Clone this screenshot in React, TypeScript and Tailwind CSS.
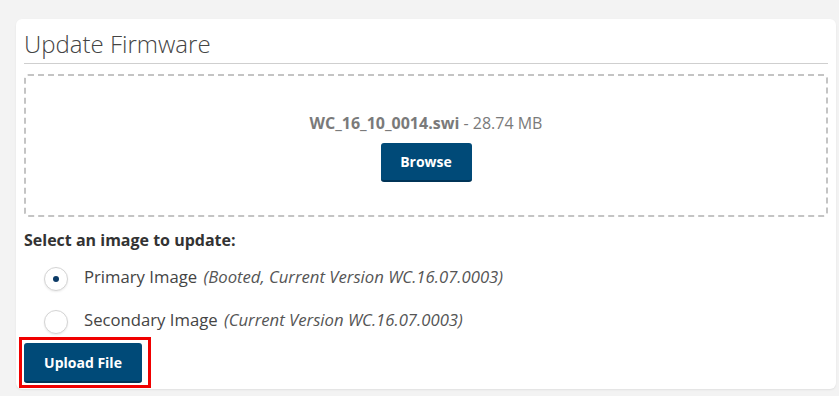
import React from "react";

const font = { fontFamily: '"Open Sans", "Liberation Sans", sans-serif' };

function Radio({ checked }: { checked?: boolean }) {
    return (
        <span className="mt-[6px] flex h-[24px] w-[24px] shrink-0 items-center justify-center rounded-full border border-[#d4d4d4] bg-white shadow-[0_1px_2px_rgba(0,0,0,0.08)]">
            {checked && <span className="h-[6px] w-[6px] rounded-full bg-[#0b3a66]"></span>}
        </span>
    );
}

export default function App() {
    return (
        <div className="min-h-[396px] bg-[#f3f3f3] pl-[16px] pr-[3px] pt-[19px] [font-family:'Open_Sans','Liberation_Sans',sans-serif]">
            <div className="h-[370px] rounded-[6px] bg-white px-[8px] shadow-[0_1px_2px_rgba(0,0,0,0.08)]">
                {/* Title */}
                <h1 className="border-b border-[#cfcfcf] pb-[3px] pt-[9px] text-[24px] font-light leading-[32px] text-[#444]">
                    Update Firmware
                </h1>

                {/* Drop zone */}
                <div className="mt-[10px] flex h-[143px] flex-col items-center justify-center gap-[9px] rounded-[4px] border-2 border-dashed border-[#c4c4c4] pt-[3px]">
                    <p className="text-[16px] leading-[22px] text-[#7a7a7a]">
                        <span className="font-bold">WC_16_10_0014.swi</span> - 28.74 MB
                    </p>
                    <button className="h-[39px] w-[91px] rounded-[3px] border-b-2 border-[#003457] bg-[#004a78] text-[14px] font-bold text-white">
                        Browse
                    </button>
                </div>

                <p className="mt-[12px] text-[16px] font-bold leading-[22px] text-[#333]">Select an image to update:</p>

                <div className="mt-[10px] flex flex-col gap-[12px] pl-[20px] text-[16.7px] leading-[31px] text-[#444]">
                    <label className="flex items-start gap-[16px]">
                        <Radio checked />
                        <span>
                            Primary Image <i className="pl-[2px] text-[#555]">(Booted, Current Version WC.16.07.0003)</i>
                        </span>
                    </label>
                    <label className="flex items-start gap-[16px]">
                        <Radio />
                        <span>
                            Secondary Image <i className="pl-[2px] text-[#555]">(Current Version WC.16.07.0003)</i>
                        </span>
                    </label>
                </div>

                <div className="relative mt-[8px] w-fit">
                    <button className="h-[40px] w-[118px] rounded-[3px] border-b-2 border-[#003457] bg-[#004a78] text-[14px] font-bold text-white" style={font}>
                        Upload File
                    </button>
                    <div className="pointer-events-none absolute left-[-5px] top-[-6px] h-[51px] w-[132px] border-[3px] border-[#f00000]"></div>
                </div>
            </div>
        </div>
    );
}
